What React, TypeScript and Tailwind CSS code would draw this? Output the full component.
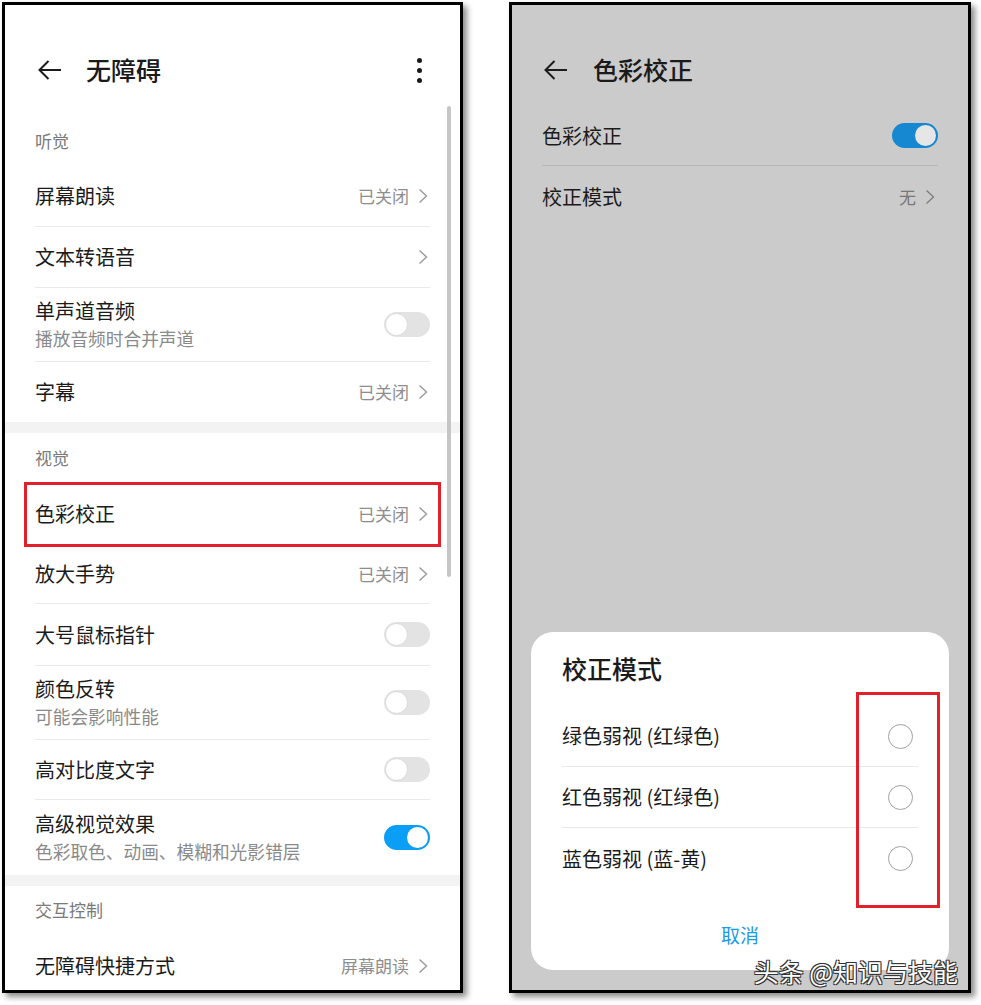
const FONT = "font-['Noto_Sans_CJK_SC','Noto_Sans',sans-serif]";

function Chevron({ color = "#9a9a9a" }: { color?: string }) {
  return (
    <svg width="10" height="16" viewBox="0 0 10 16" className="shrink-0">
      <path d="M1.5 1.5 L8.5 8 L1.5 14.5" fill="none" stroke={color} strokeWidth="1.4" />
    </svg>
  );
}

function BackArrow() {
  return (
    <svg width="24" height="20" viewBox="0 0 24 20" className="shrink-0">
      <path d="M1.5 10 H23 M10.5 1 L1.5 10 L10.5 19" fill="none" stroke="#1c1c1c" strokeWidth="2" />
    </svg>
  );
}

function Toggle({ on = false, dim = false }: { on?: boolean; dim?: boolean }) {
  if (on) {
    return (
      <div className={`w-[46px] h-[25px] rounded-full flex items-center justify-end pr-[2px] shrink-0 ${dim ? "bg-[#1688d2]" : "bg-[#0b9ef6]"}`}>
        <div className={`w-[21px] h-[21px] rounded-full ${dim ? "bg-[#e6e6e6]" : "bg-white"}`} />
      </div>
    );
  }
  return (
    <div className="w-[46px] h-[25px] rounded-full bg-[#e3e3e3] flex items-center pl-[1px] shrink-0">
      <div className="w-[23px] h-[23px] rounded-full bg-white border border-[#dadada]" />
    </div>
  );
}

function Row({
  title,
  sub,
  value,
  chevron,
  toggle,
  h = "h-[61px]",
  divider = true,
}: {
  title: string;
  sub?: string;
  value?: string;
  chevron?: boolean;
  toggle?: "on" | "off";
  h?: string;
  divider?: boolean;
}) {
  return (
    <div className="px-[30px]">
      <div className={`${h} flex items-center justify-between ${divider ? "border-b border-[#e9e9e9]" : ""}`}>
        <div className="flex flex-col">
          <span className="text-[20px] leading-[26px] text-[#1b1b1b]">{title}</span>
          {sub && <span className="text-[17.7px] leading-[28px] text-[#8a8a8a]">{sub}</span>}
        </div>
        <div className="flex items-center gap-[9px]">
          {value && <span className="text-[17px] text-[#8e8e8e]">{value}</span>}
          {chevron && <div className="mr-[2px]"><Chevron /></div>}
          {toggle && <Toggle on={toggle === "on"} />}
        </div>
      </div>
    </div>
  );
}

function Section({ label, h = "h-[50px]" }: { label: string; h?: string }) {
  return (
    <div className={`${h} px-[30px] flex items-center`}>
      <span className="text-[17px] text-[#7a7a7a]">{label}</span>
    </div>
  );
}

function Band() {
  return <div className="h-[11px] bg-[#f3f3f3]" />;
}

function LeftPhone() {
  return (
    <div className="relative w-[461px] h-[991px] border-[3px] border-black bg-white overflow-hidden shadow-[4px_4px_6px_rgba(0,0,0,0.45)] shrink-0">
      <div className="h-[111px] px-[33px] pt-[45px]">
        <div className="h-[40px] flex items-center">
          <BackArrow />
          <span className="ml-[24px] text-[25px] font-medium text-[#1a1a1a]">无障碍</span>
          <div className="ml-auto mr-[5px] flex flex-col gap-[5px]">
            <div className="w-[5px] h-[5px] rounded-full bg-[#1a1a1a]" />
            <div className="w-[5px] h-[5px] rounded-full bg-[#1a1a1a]" />
            <div className="w-[5px] h-[5px] rounded-full bg-[#1a1a1a]" />
          </div>
        </div>
      </div>
      <Section label="听觉" />
      <Row title="屏幕朗读" value="已关闭" chevron />
      <Row title="文本转语音" chevron />
      <Row title="单声道音频" sub="播放音频时合并声道" toggle="off" h="h-[74px]" />
      <Row title="字幕" value="已关闭" chevron h="h-[60px]" divider={false} />
      <Band />
      <Section label="视觉" />
      <div className="relative">
        <Row title="色彩校正" value="已关闭" chevron h="h-[62px]" divider={false} />
        <div className="absolute left-[19px] right-[19px] -top-[1px] -bottom-[2px] border-[3px] border-[#e1202b]" />
      </div>
      <Row title="放大手势" value="已关闭" chevron h="h-[59px]" />
      <Row title="大号鼠标指针" toggle="off" h="h-[62px]" />
      <Row title="颜色反转" sub="可能会影响性能" toggle="off" h="h-[74px]" />
      <Row title="高对比度文字" toggle="off" h="h-[60px]" />
      <Row title="高级视觉效果" sub="色彩取色、动画、模糊和光影错层" toggle="on" h="h-[75px]" divider={false} />
      <Band />
      <Section label="交互控制" h="h-[48px]" />
      <Row title="无障碍快捷方式" value="屏幕朗读" chevron h="h-[64px]" divider={false} />
      <div className="absolute left-[442px] top-[101px] w-[4px] h-[471px] rounded-full bg-[#c6c6c6]" />
    </div>
  );
}

function Option({ label, divider = true }: { label: string; divider?: boolean }) {
  return (
    <div className={`h-[61px] flex items-center justify-between ${divider ? "border-b border-[#e8e8e8]" : ""}`}>
      <span className="text-[20px] text-[#1b1b1b]">{label}</span>
      <div className="mr-[5px] w-[25px] h-[25px] rounded-full border border-[#a0a0a0]" />
    </div>
  );
}

function RightPhone() {
  return (
    <div className="relative w-[462px] h-[991px] border-[3px] border-black bg-[#cbcbcb] overflow-hidden shadow-[4px_4px_6px_rgba(0,0,0,0.45)] shrink-0 flex flex-col">
      <div className="h-[101px] px-[32px] pt-[45px]">
        <div className="h-[40px] flex items-center">
          <BackArrow />
          <span className="ml-[25px] text-[25px] font-medium text-[#1a1a1a]">色彩校正</span>
        </div>
      </div>
      <div className="px-[30px]">
        <div className="h-[60px] flex items-center justify-between border-b border-[#b6b6b6]">
          <span className="text-[20px] text-[#1b1b1b]">色彩校正</span>
          <Toggle on dim />
        </div>
        <div className="h-[62px] flex items-center justify-between">
          <span className="text-[20px] text-[#1b1b1b]">校正模式</span>
          <div className="flex items-center gap-[9px] mr-[3px]">
            <span className="text-[17px] text-[#777]">无</span>
            <Chevron color="#808080" />
          </div>
        </div>
      </div>
      <div className="flex-1" />
      <div className="relative mx-[19px] mb-[20px] h-[338px] rounded-[22px] bg-white px-[31px] flex flex-col">
        <div className="h-[74px] flex items-center">
          <span className="text-[25px] font-medium text-[#1a1a1a]">校正模式</span>
        </div>
        <Option label="绿色弱视 (红绿色)" />
        <Option label="红色弱视 (红绿色)" />
        <Option label="蓝色弱视 (蓝-黄)" divider={false} />
        <div className="mt-[11px] h-[70px] flex items-center justify-center">
          <span className="text-[19px] text-[#1a9be3]">取消</span>
        </div>
        <div className="absolute right-[9px] top-[60px] w-[84px] h-[216px] border-[3px] border-[#e1202b]" />
      </div>
      <div className="absolute right-[10px] bottom-[4px] text-[25px] leading-[30px] text-white [text-shadow:1px_1px_0_#333,-1px_-1px_0_#333,1px_-1px_0_#333,-1px_1px_0_#333]">
        头条 @知识与技能
      </div>
    </div>
  );
}

export default function App() {
  return (
    <div className={`w-[981px] h-[1005px] bg-white pl-[2px] pt-[2px] flex gap-[46px] ${FONT}`}>
      <LeftPhone />
      <RightPhone />
    </div>
  );
}
